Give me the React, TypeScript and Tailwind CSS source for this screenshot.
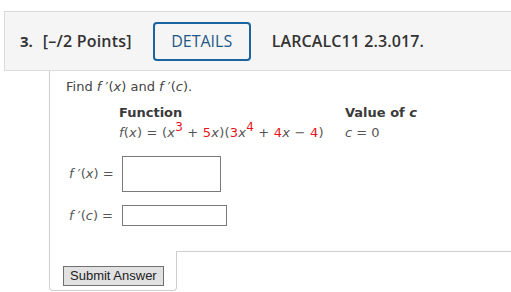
import React from "react"

const red = "text-[#e8161c]"

function M({ children }: { children: React.ReactNode }) {
  return <i className="italic">{children}</i>
}

export default function App() {
  return (
    <div className="w-[511px] h-[292px] bg-white overflow-hidden pt-[11px]">
      {/* header */}
      <div className="ml-[4px] h-[60px] border border-r-0 border-[#dcdcdc] bg-[#f5f5f5] flex items-center font-['Open_Sans',sans-serif] text-[#333]">
        <span className="ml-[15px] text-[15px] font-bold">3.</span>
        <span className="ml-[10px] text-[16px] font-semibold tracking-[0.2px]">[–/2 Points]</span>
        <div className="ml-[21px] w-[98px] h-[39px] border-2 border-[#1a64a0] rounded-[4px] flex items-center justify-center text-[16px] text-[#1f5786]">
          DETAILS
        </div>
        <span className="ml-[21px] text-[16px] font-semibold tracking-[0.1px]">LARCALC11 2.3.017.</span>
      </div>

      {/* question body */}
      <div className="ml-[49px] border-l border-[#cfcfcf] pl-[16px] pt-[7px] h-[180px] font-['DejaVu_Sans',Verdana,sans-serif] text-[13px] text-[#444]">
        <div className="leading-[18px]">
          Find <M>f</M> ′(<M>x</M>) and <M>f</M> ′(<M>c</M>).
        </div>
        <div className="mt-[8px] ml-[53px] grid grid-cols-[226px_auto] gap-y-[2px] leading-[18px]">
          <div className="font-bold text-[#3a3a3a]">Function</div>
          <div className="font-bold text-[#3a3a3a]">
            Value of <M>c</M>
          </div>
          <div className="text-[#555] whitespace-nowrap tracking-[0.2px]">
            <M>f</M>(<M>x</M>) = (<M>x</M>
            <sup className={`${red} text-[12px] leading-none`}>3</sup> + <span className={red}>5</span>
            <M>x</M>)(<span className={red}>3</span>
            <M>x</M>
            <sup className={`${red} text-[12px] leading-none`}>4</sup> + <span className={red}>4</span>
            <M>x</M> − <span className={red}>4</span>)
          </div>
          <div className="text-[#555]">
            <M>c</M> = 0
          </div>
        </div>
        <div className="mt-[14px] flex items-center">
          <span className="ml-[3px] w-[53px] text-[#555]">
            <M>f</M> ′(<M>x</M>) =
          </span>
          <div className="w-[99px] h-[36px] border border-[#7a7a7a] bg-white" />
        </div>
        <div className="mt-[13px] flex items-center">
          <span className="ml-[3px] w-[53px] text-[#555]">
            <M>f</M> ′(<M>c</M>) =
          </span>
          <div className="w-[105px] h-[21px] border border-[#7a7a7a] bg-white" />
        </div>
      </div>

      {/* footer */}
      <div className="ml-[49px] flex">
        <div className="w-[128px] h-[40px] border-x border-b border-[#cfcfcf] rounded-b-[4px] pl-[13px] pt-[11px]">
          <button className="h-[20px] px-[6px] bg-[#e1e1e1] border border-[#707070] text-[13px] leading-[18px] text-[#222] font-['Liberation_Sans',Arial,sans-serif]">
            Submit Answer
          </button>
        </div>
        <div className="flex-1 border-t border-[#cfcfcf]" />
      </div>
    </div>
  )
}
